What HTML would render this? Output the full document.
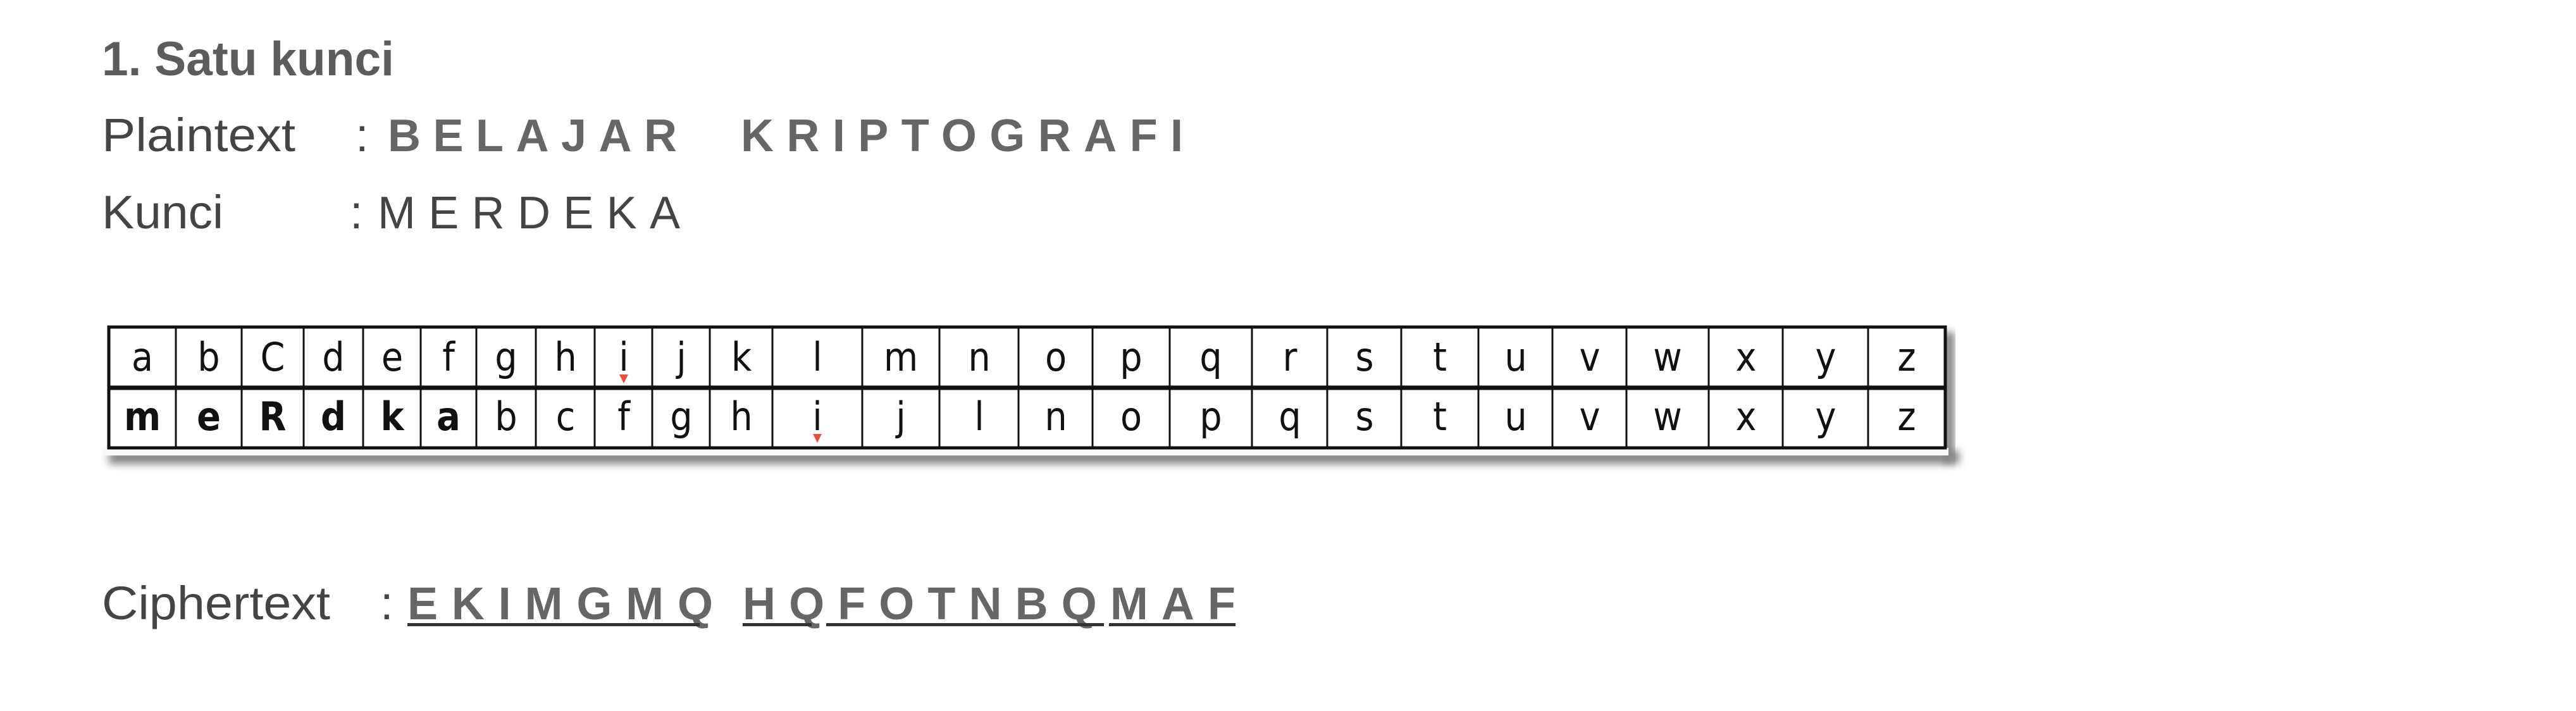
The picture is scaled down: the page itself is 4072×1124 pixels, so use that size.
<!DOCTYPE html>
<html><head><meta charset="utf-8"><style>
html,body{margin:0;padding:0;background:#fff;}
svg{display:block;}
.t{font-family:"Liberation Sans",sans-serif;}
.c{font-family:"Liberation Sans Narrow","DejaVu Sans Condensed","Liberation Sans",sans-serif;}
</style></head><body>
<svg width="4072" height="1124" viewBox="0 0 4072 1124" xmlns="http://www.w3.org/2000/svg">
<defs>
<filter id="sh" x="-5%" y="-50%" width="110%" height="200%"><feGaussianBlur stdDeviation="6"/></filter>
</defs>
<rect width="4072" height="1124" fill="#fff"/>
<g class="t">
<text x="161" y="119" font-size="76" font-weight="bold" fill="#5c5c5c" textLength="462" lengthAdjust="spacingAndGlyphs">1. Satu kunci</text>
<text x="161" y="239" font-size="74" fill="#444" textLength="306" lengthAdjust="spacingAndGlyphs">Plaintext</text>
<text x="562" y="239" font-size="74" fill="#444">:</text>
<text x="613" y="239" font-size="72" font-weight="bold" fill="#666" textLength="457" lengthAdjust="spacing">BELAJAR</text>
<text x="1171" y="239" font-size="72" font-weight="bold" fill="#666" textLength="699" lengthAdjust="spacing">KRIPTOGRAFI</text>
<text x="161" y="361" font-size="74" fill="#444" textLength="192" lengthAdjust="spacingAndGlyphs">Kunci</text>
<text x="553" y="361" font-size="74" fill="#444">:</text>
<text x="597" y="361" font-size="72" fill="#444" textLength="478" lengthAdjust="spacing">MERDEKA</text>
<text x="161" y="979" font-size="74" fill="#444" textLength="361" lengthAdjust="spacingAndGlyphs">Ciphertext</text>
<text x="601" y="979" font-size="74" fill="#444">:</text>
<text x="644" y="979" font-size="72" font-weight="bold" fill="#666" textLength="483" lengthAdjust="spacing">EKIMGMQ</text>
<text x="1174" y="979" font-size="72" font-weight="bold" fill="#666" textLength="779" lengthAdjust="spacing">HQFOTNBQMAF</text>
</g>
<g fill="#333">
<rect x="644" y="985" width="462" height="5"/>
<rect x="1174" y="985" width="109" height="5"/>
<rect x="1306" y="985" width="439" height="5"/>
<rect x="1753" y="985" width="200" height="5"/>
</g>
<!-- table shadow -->
<rect x="172" y="712" width="2925" height="22" fill="#888" filter="url(#sh)"/>
<rect x="3070" y="525" width="20" height="205" fill="#888" filter="url(#sh)"/>
<rect x="165" y="708" width="2915" height="12" fill="#fafafa"/>
<!-- table -->
<rect x="172" y="517" width="2903" height="191" fill="#fff" stroke="#111" stroke-width="5"/>
<line x1="172" y1="613" x2="3075" y2="613" stroke="#111" stroke-width="7"/>
<g stroke="#111" stroke-width="3">
<line x1="278" y1="517" x2="278" y2="708"/><line x1="382" y1="517" x2="382" y2="708"/>
<line x1="480" y1="517" x2="480" y2="708"/><line x1="574" y1="517" x2="574" y2="708"/>
<line x1="665" y1="517" x2="665" y2="708"/><line x1="753" y1="517" x2="753" y2="708"/>
<line x1="847" y1="517" x2="847" y2="708"/><line x1="940" y1="517" x2="940" y2="708"/>
<line x1="1031" y1="517" x2="1031" y2="708"/><line x1="1122" y1="517" x2="1122" y2="708"/>
<line x1="1221" y1="517" x2="1221" y2="708"/><line x1="1363" y1="517" x2="1363" y2="708"/>
<line x1="1485" y1="517" x2="1485" y2="708"/><line x1="1610" y1="517" x2="1610" y2="708"/>
<line x1="1727" y1="517" x2="1727" y2="708"/><line x1="1849" y1="517" x2="1849" y2="708"/>
<line x1="1979" y1="517" x2="1979" y2="708"/><line x1="2098" y1="517" x2="2098" y2="708"/>
<line x1="2215" y1="517" x2="2215" y2="708"/><line x1="2337" y1="517" x2="2337" y2="708"/>
<line x1="2454" y1="517" x2="2454" y2="708"/><line x1="2571" y1="517" x2="2571" y2="708"/>
<line x1="2701" y1="517" x2="2701" y2="708"/><line x1="2818" y1="517" x2="2818" y2="708"/>
<line x1="2953" y1="517" x2="2953" y2="708"/>
</g>
<g class="c" font-size="62" fill="#111" text-anchor="middle">
<text x="225" y="586">a</text><text x="330" y="586">b</text><text x="431" y="586">C</text>
<text x="527" y="586">d</text><text x="620" y="586">e</text><text x="709" y="586">f</text>
<text x="800" y="586">g</text><text x="894" y="586">h</text><text x="986" y="586">i</text>
<text x="1077" y="586">j</text><text x="1172" y="586">k</text><text x="1292" y="586">l</text>
<text x="1424" y="586">m</text><text x="1548" y="586">n</text><text x="1669" y="586">o</text>
<text x="1788" y="586">p</text><text x="1914" y="586">q</text><text x="2039" y="586">r</text>
<text x="2157" y="586">s</text><text x="2276" y="586">t</text><text x="2396" y="586">u</text>
<text x="2513" y="586">v</text><text x="2636" y="586">w</text><text x="2760" y="586">x</text>
<text x="2886" y="586">y</text><text x="3014" y="586">z</text>
</g>
<g class="c" font-size="62" fill="#111" text-anchor="middle">
<g font-weight="bold">
<text x="225" y="680">m</text><text x="330" y="680">e</text><text x="431" y="680">R</text>
<text x="527" y="680">d</text><text x="620" y="680">k</text><text x="709" y="680">a</text>
</g>
<text x="800" y="680">b</text><text x="894" y="680">c</text><text x="986" y="680">f</text>
<text x="1077" y="680">g</text><text x="1172" y="680">h</text><text x="1292" y="680">i</text>
<text x="1424" y="680">j</text><text x="1548" y="680">l</text><text x="1669" y="680">n</text>
<text x="1788" y="680">o</text><text x="1914" y="680">p</text><text x="2039" y="680">q</text>
<text x="2157" y="680">s</text><text x="2276" y="680">t</text><text x="2396" y="680">u</text>
<text x="2513" y="680">v</text><text x="2636" y="680">w</text><text x="2760" y="680">x</text>
<text x="2886" y="680">y</text><text x="3014" y="680">z</text>
</g>
<path d="M979 592 L993 592 L986 606 Z" fill="#e8503a"/>
<path d="M1285 686 L1299 686 L1292 700 Z" fill="#e8503a"/>
</svg>
</body></html>
